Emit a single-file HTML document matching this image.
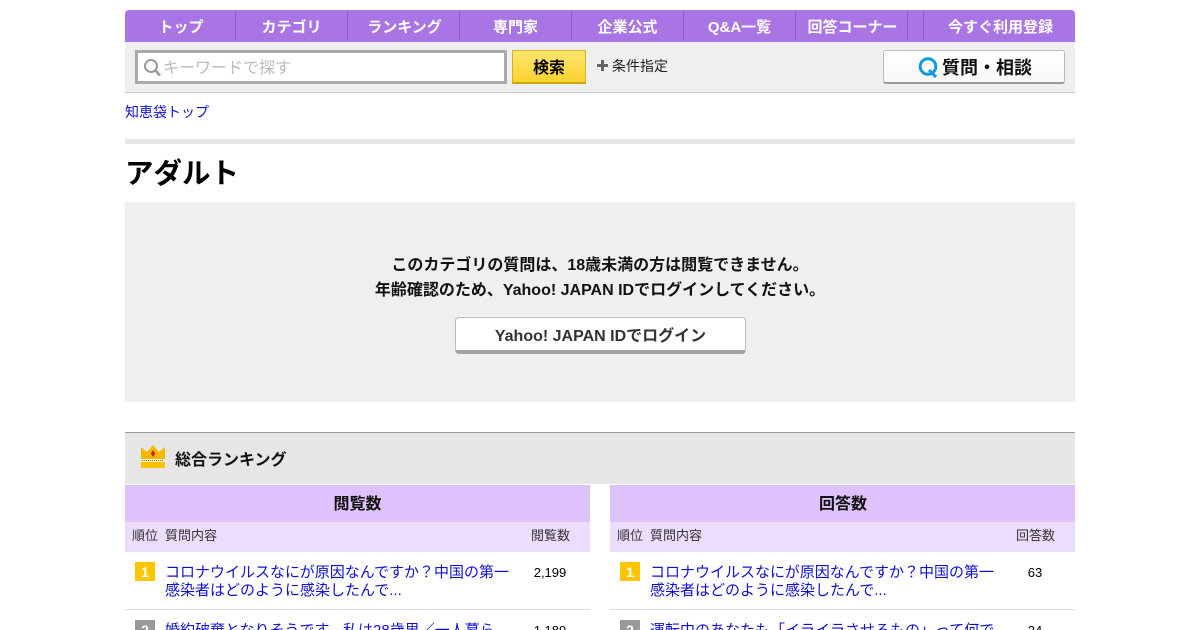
<!DOCTYPE html>
<html lang="ja"><head><meta charset="utf-8"><title>アダルト</title>
<style>
*{box-sizing:border-box;margin:0;padding:0}
html,body{width:1200px;height:630px;overflow:hidden;background:#fff}
body{position:relative;font-family:"Liberation Sans","Noto Sans CJK JP",sans-serif;color:#000;font-size:14px}
.a{position:absolute;white-space:nowrap}
.nav{left:125px;top:10px;width:950px;height:32px;background:#a974e3;border-radius:4px 4px 0 0}
.nt{top:10px;height:32px;line-height:36px;text-align:center;color:#fff;font-weight:bold;font-size:15px}
.d{top:11px;width:1px;height:30px;background:#9260cc}
.bar{left:125px;top:42px;width:950px;height:51px;background:#efefef;border-bottom:1px solid #ccc}
a{color:#1111cc;text-decoration:none}
.rank{width:20px;height:19px;line-height:20px;text-align:center;color:#fff;font-weight:bold;font-size:14px}
.q{font-size:15px;line-height:18px;color:#1111cc;white-space:normal;width:350px}
.num{font-size:13px;text-align:center;width:70px}
.th{font-size:13px;color:#333}
</style></head><body>
<div class="a nav"></div>
<div class="a nt" style="left:126px;width:110px">トップ</div>
<div class="a d" style="left:235px"></div>
<div class="a nt" style="left:236px;width:111px">カテゴリ</div>
<div class="a d" style="left:347px"></div>
<div class="a nt" style="left:349px;width:111px">ランキング</div>
<div class="a d" style="left:459px"></div>
<div class="a nt" style="left:460px;width:111px">専門家</div>
<div class="a d" style="left:571px"></div>
<div class="a nt" style="left:572px;width:111px">企業公式</div>
<div class="a d" style="left:683px"></div>
<div class="a nt" style="left:684px;width:111px">Q&amp;A一覧</div>
<div class="a d" style="left:795px"></div>
<div class="a nt" style="left:797px;width:111px">回答コーナー</div>
<div class="a d" style="left:907px"></div>
<div class="a d" style="left:923px"></div>
<div class="a nt" style="left:925px;width:151px">今すぐ利用登録</div>

<div class="a bar"></div>
<div class="a" style="left:135px;top:50px;width:372px;height:34px;background:#fff;border:3px solid #aaa"></div>
<svg class="a" style="left:143px;top:58px" width="19" height="20" viewBox="0 0 19 20"><circle cx="8" cy="8" r="6" fill="none" stroke="#999" stroke-width="2"/><path d="M12.500 12.500l4.500 5" stroke="#999" stroke-width="2.500" fill="none"/></svg>
<div class="a" style="left:163px;top:59px;font-size:16px;line-height:20px;color:#bbb">キーワードで探す</div>
<div class="a" style="left:512px;top:50px;width:74px;height:34px;background:linear-gradient(#fde56f,#fbd22f);border:1px solid #d8b21c;border-bottom:2px solid #c9a516;text-align:center;font-weight:bold;font-size:16px;line-height:35px">検索</div>
<div class="a" style="left:597px;top:64px;width:11px;height:3px;background:#666"></div>
<div class="a" style="left:601px;top:60px;width:3px;height:11px;background:#666"></div>
<div class="a" style="left:612px;top:57px;font-size:14px;line-height:18px;color:#222">条件指定</div>
<div class="a" style="left:883px;top:50px;width:182px;height:34px;background:linear-gradient(#fff,#f8f8f8);border:1px solid #bbb;border-bottom:2px solid #999;border-radius:3px"></div>
<svg class="a" style="left:917px;top:56px" width="22" height="22" viewBox="0 0 22 22"><circle cx="11" cy="10.500" r="7.800" fill="none" stroke="#0d9ae6" stroke-width="3"/><path d="M12 14l7 7" stroke="#0d9ae6" stroke-width="3" fill="none"/></svg>
<div class="a" style="left:942px;top:56px;font-size:18px;line-height:24px;font-weight:bold;color:#111">質問・相談</div>

<div class="a" style="left:125px;top:103px;font-size:14px;line-height:18px"><a href="#">知恵袋トップ</a></div>
<div class="a" style="left:125px;top:139px;width:950px;height:5px;background:#e6e6e6"></div>
<div class="a" style="left:125px;top:156px;font-size:28.500px;line-height:36px;font-weight:bold">アダルト</div>

<div class="a" style="left:125px;top:202px;width:950px;height:200px;background:#efefef"></div>
<div class="a" style="left:125px;top:253px;width:950px;text-align:center;font-size:16px;line-height:25px;font-weight:bold;color:#111">このカテゴリの質問は、18歳未満の方は閲覧できません。<br>年齢確認のため、Yahoo! JAPAN IDでログインしてください。</div>
<div class="a" style="left:455px;top:317px;width:291px;height:37px;background:#fff;border:1px solid #bbb;border-bottom:4px solid #a3a3a3;border-radius:4px;text-align:center;font-size:16px;line-height:37px;font-weight:bold;color:#333">Yahoo! JAPAN IDでログイン</div>

<div class="a" style="left:125px;top:432px;width:950px;height:52px;background:#e6e6e6;border-top:1px solid #999"></div>
<svg class="a" style="left:141px;top:445px" width="24" height="24" viewBox="0 0 24 24"><path d="M0 2l6 5 6-7 6 7 6-5v12H0z" fill="#f5b800"/><path d="M0 14h24v9H0z" fill="#f8c400"/><path d="M0 14h24v3H0z" fill="#fff3c0"/><path d="M1 15.500h22" stroke="#a87800" stroke-width="1" stroke-dasharray="1 1"/><path d="M12 5l2.200 3.500-2.200 3.500-2.200-3.500z" fill="#c8201c"/></svg>
<div class="a" style="left:175px;top:451px;font-size:16px;line-height:20px;font-weight:bold;color:#111">総合ランキング</div>

<div class="a" style="left:125px;top:485px;width:465px;height:37px;background:#dfc2fb;text-align:center;font-size:16px;line-height:40px;font-weight:bold;color:#111">閲覧数</div>
<div class="a" style="left:125px;top:522px;width:465px;height:30px;background:#ecdcfd"></div>
<div class="a th" style="left:132px;top:527px;line-height:18px">順位</div>
<div class="a th" style="left:165px;top:527px;line-height:18px">質問内容</div>
<div class="a th" style="left:531px;top:527px;line-height:18px">閲覧数</div>
<div class="a rank" style="left:135px;top:562px;background:#fbc500">1</div>
<div class="a q" style="left:165px;top:564px"><a href="#">コロナウイルスなにが原因なんですか？中国の第一感染者はどのように感染したんで...</a></div>
<div class="a num" style="left:515px;top:564px;line-height:18px">2,199</div>
<div class="a" style="left:125px;top:609px;width:465px;height:1px;background:#ddd"></div>
<div class="a rank" style="left:135px;top:620px;background:#999">2</div>
<div class="a q" style="left:165px;top:622px;width:345px;height:18px;overflow:hidden"><a href="#">婚約破棄となりそうです。私は28歳男／一人暮ら</a></div>
<div class="a num" style="left:515px;top:622px;line-height:18px">1,189</div>

<div class="a" style="left:610px;top:485px;width:465px;height:37px;padding-left:1px;background:#dfc2fb;text-align:center;font-size:16px;line-height:40px;font-weight:bold;color:#111">回答数</div>
<div class="a" style="left:610px;top:522px;width:465px;height:30px;background:#ecdcfd"></div>
<div class="a th" style="left:617px;top:527px;line-height:18px">順位</div>
<div class="a th" style="left:650px;top:527px;line-height:18px">質問内容</div>
<div class="a th" style="left:1016px;top:527px;line-height:18px">回答数</div>
<div class="a rank" style="left:620px;top:562px;background:#fbc500">1</div>
<div class="a q" style="left:650px;top:564px"><a href="#">コロナウイルスなにが原因なんですか？中国の第一感染者はどのように感染したんで...</a></div>
<div class="a num" style="left:1000px;top:564px;line-height:18px">63</div>
<div class="a" style="left:610px;top:609px;width:465px;height:1px;background:#ddd"></div>
<div class="a rank" style="left:620px;top:620px;background:#999">2</div>
<div class="a q" style="left:650px;top:622px;width:345px;height:18px;overflow:hidden"><a href="#">運転中のあなたも「イライラさせるもの」って何で</a></div>
<div class="a num" style="left:1000px;top:622px;line-height:18px">24</div>
</body></html>
